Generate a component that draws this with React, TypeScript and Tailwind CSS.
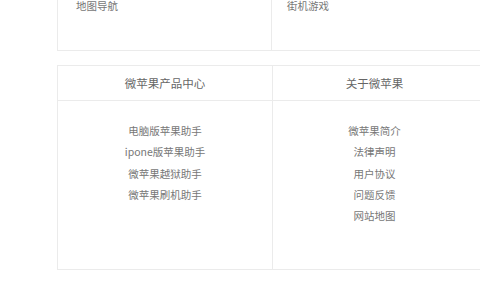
import React from 'react';

const products = ['电脑版苹果助手', 'ipone版苹果助手', '微苹果越狱助手', '微苹果刷机助手'];
const about = ['微苹果简介', '法律声明', '用户协议', '问题反馈', '网站地图'];

const App = () => {
  return (
    <div
      className="w-[480px] h-[285px] overflow-hidden bg-white"
      style={{ fontFamily: '"Noto Sans CJK SC", "Noto Sans", sans-serif' }}
    >
      {/* Upper box (cut at top) */}
      <div className="ml-[57px] mt-[-5px] w-[430px] h-[56px] border-x border-b border-[#ebebeb] grid grid-cols-[214px_1fr]">
        <div className="border-r border-[#ebebeb] pl-[18px] text-[10.5px] leading-[21px] text-[#777]">地图导航</div>
        <div className="pl-[15px] text-[10.5px] leading-[21px] text-[#777]">街机游戏</div>
      </div>

      {/* Lower box */}
      <div className="ml-[57px] mt-[14px] w-[430px] border border-[#ebebeb] grid grid-cols-[215px_1fr]">
        <div className="border-r border-[#ebebeb] flex flex-col">
          <div className="h-[35px] border-b border-[#ebebeb] pt-[2px] flex items-center justify-center text-[11.5px] text-[#666]">
            微苹果产品中心
          </div>
          <div className="h-[168px] pt-[19px] flex flex-col items-center">
            {products.map((p) => (
              <div key={p} className="text-[10.5px] leading-[21.3px] text-[#777]">{p}</div>
            ))}
          </div>
        </div>
        <div className="flex flex-col">
          <div className="h-[35px] border-b border-[#ebebeb] pt-[2px] pr-[10px] flex items-center justify-center text-[11.5px] text-[#666]">
            关于微苹果
          </div>
          <div className="h-[168px] pt-[19px] pr-[10px] flex flex-col items-center">
            {about.map((p) => (
              <div key={p} className="text-[10.5px] leading-[21.3px] text-[#777]">{p}</div>
            ))}
          </div>
        </div>
      </div>
    </div>
  );
};

export default App;
